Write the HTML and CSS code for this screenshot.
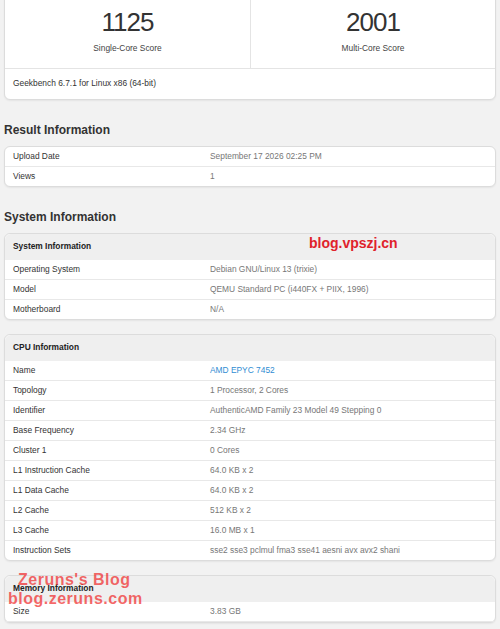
FILE: index.html
```html
<!DOCTYPE html>
<html lang="en">
<head>
  <meta charset="UTF-8" />
  <title>Geekbench 6 Result</title>
  <link rel="stylesheet" href="styles.css">
</head>
<body>

<div class="page">

  <div class="card score-card">
    <div class="scores">
      <div class="score">
        <div class="score-value">1125</div>
        <div class="score-name">Single-Core Score</div>
      </div>
      <div class="score">
        <div class="score-value">2001</div>
        <div class="score-name">Multi-Core Score</div>
      </div>
    </div>
    <div class="score-footer">Geekbench 6.7.1 for Linux x86 (64-bit)</div>
  </div>

  <h2>Result Information</h2>
  <div class="card">
    <div class="row"><span class="name">Upload Date</span><span class="value">September 17 2026 02:25 PM</span></div>
    <div class="row"><span class="name">Views</span><span class="value">1</span></div>
  </div>

  <h2>System Information</h2>
  <div class="card">
    <div class="card-head">System Information</div>
    <div class="row"><span class="name">Operating System</span><span class="value">Debian GNU/Linux 13 (trixie)</span></div>
    <div class="row"><span class="name">Model</span><span class="value">QEMU Standard PC (i440FX + PIIX, 1996)</span></div>
    <div class="row"><span class="name">Motherboard</span><span class="value">N/A</span></div>
    <span class="mark mark-vpszj">blog.vpszj.cn</span>
  </div>

  <div class="card">
    <div class="card-head">CPU Information</div>
    <div class="row"><span class="name">Name</span><span class="value"><a href="#">AMD EPYC 7452</a></span></div>
    <div class="row"><span class="name">Topology</span><span class="value">1 Processor, 2 Cores</span></div>
    <div class="row"><span class="name">Identifier</span><span class="value">AuthenticAMD Family 23 Model 49 Stepping 0</span></div>
    <div class="row"><span class="name">Base Frequency</span><span class="value">2.34 GHz</span></div>
    <div class="row"><span class="name">Cluster 1</span><span class="value">0 Cores</span></div>
    <div class="row"><span class="name">L1 Instruction Cache</span><span class="value">64.0 KB x 2</span></div>
    <div class="row"><span class="name">L1 Data Cache</span><span class="value">64.0 KB x 2</span></div>
    <div class="row"><span class="name">L2 Cache</span><span class="value">512 KB x 2</span></div>
    <div class="row"><span class="name">L3 Cache</span><span class="value">16.0 MB x 1</span></div>
    <div class="row"><span class="name">Instruction Sets</span><span class="value">sse2 sse3 pclmul fma3 sse41 aesni avx avx2 shani</span></div>
  </div>

  <div class="card">
    <div class="card-head">Memory Information</div>
    <div class="row"><span class="name">Size</span><span class="value">3.83 GB</span></div>
    <div class="mark mark-zeruns">
      <div class="mark-line1">Zeruns's Blog</div>
      <div>blog.zeruns.com</div>
    </div>
  </div>

</div>

</body>
</html>
```

FILE: styles.css
```css
body {
  background-color: #f2f2f2;
  color: #333;
  font-family: 'Liberation Sans', Arial, sans-serif;
  font-size: 8.4px;
  line-height: 12px;
  margin: 0;
  padding: 0;
  overflow: hidden;
}
.page {
  padding: 0 4px;
}
.card {
  position: relative;
  background-color: #fff;
  border: 1px solid #dcdcdc;
  border-radius: 6px;
  box-shadow: 0 1px 2px rgba(0,0,0,0.06);
  margin-bottom: 14px;
}
h2 {
  font-size: 12px;
  line-height: 14px;
  font-weight: bold;
  color: #333;
  margin: 23px 0 9px;
}

/* score summary */
.score-card {
  margin-top: -10px;
  margin-bottom: 0;
}
.scores {
  display: grid;
  grid-template-columns: 1fr 1fr;
}
.score {
  text-align: center;
  padding: 16px 0 14px;
}
.score + .score {
  border-left: 1px solid #e4e4e4;
}
.score-value {
  font-size: 26px;
  line-height: 30px;
  letter-spacing: -1px;
  color: #333;
}
.score-name {
  margin-top: 5px;
  color: #444;
}
.score-footer {
  border-top: 1px solid #e4e4e4;
  padding: 8px 8px 10px;
  color: #333;
}

/* info rows */
.card-head {
  background-color: #efefef;
  border-radius: 6px 6px 0 0;
  font-weight: bold;
  color: #222;
  padding: 6px 8px 8px;
}
.row {
  display: grid;
  grid-template-columns: 197px 1fr;
  padding: 3px 8px 4px;
  border-bottom: 1px solid #e8e8e8;
}
.row:last-of-type {
  border-bottom: none;
}
.name {
  color: #333;
}
.value {
  color: #777;
}
.value a {
  color: #2f8dd3;
  text-decoration: none;
}

/* blog watermarks */
.mark {
  position: absolute;
  font-weight: bold;
  white-space: nowrap;
  pointer-events: none;
}
.mark-vpszj {
  top: 1px;
  left: 304px;
  font-size: 14px;
  line-height: 16px;
  color: #e0222b;
}
.mark-zeruns {
  top: -5px;
  left: 3px;
  font-size: 16px;
  line-height: 18.5px;
  letter-spacing: 0.5px;
  color: rgba(240, 45, 45, 0.72);
}
.mark-line1 {
  padding-left: 10px;
}
```
